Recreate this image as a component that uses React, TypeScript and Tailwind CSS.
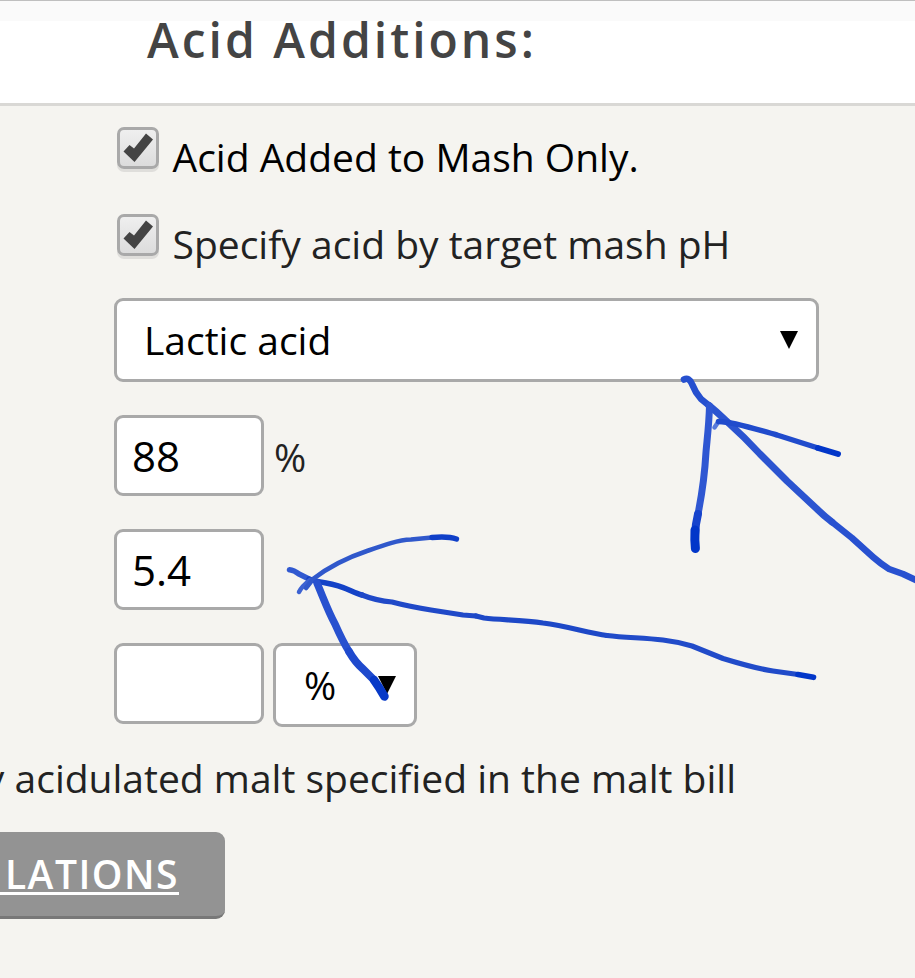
import type { ReactNode } from "react";
import clsx from "clsx";

interface InkSegment {
  d: string;
  width: number;
  color: string;
}

const inkSegments: InkSegment[] = [
  // arrow to the acid select
  { d: "M684 379.5 Q689 377 692 384 Q695 392 701 399 L709 405.5", width: 6.5, color: "#2650cf" },
  { d: "M709 405.5 C717 412 720 415 727 421.5 C741 434 748 441 760 454 L787 481 L817 509 Q824 516 832 522", width: 7, color: "#2b54d0" },
  { d: "M832 522 L852 538 L873 557 Q881 564 889 569 L903 574 L918 581", width: 6.5, color: "#2851d0" },
  { d: "M709.5 406 C709 425 707 440 706 452 C705 470 702 494 698 514", width: 7, color: "#2f57d2" },
  { d: "M698 514 Q695.5 524 695 535", width: 8, color: "#1744cc" },
  { d: "M695 530 Q694.5 540 695.4 548.5", width: 9, color: "#0236c9" },
  { d: "M714.5 427.5 L718.5 421.5", width: 4.5, color: "#587adb" },
  { d: "M718.5 421.5 C735 422 755 429 777 435 L818 448", width: 5.5, color: "#204bcc" },
  { d: "M818 448 L838 454", width: 6, color: "#0236c9" },
  // arrow to the pH field
  { d: "M289.5 569.7 Q294 570 299 574 L309 579", width: 5.5, color: "#3159d0" },
  { d: "M309 579 Q317 581.5 326 583 C345 586 351 592 362 595", width: 5.5, color: "#1442c7" },
  { d: "M362 595 C372 599 379 601 392 602 C407 606 419 608 431 610 L463 615 L476 616", width: 5.2, color: "#2049c8" },
  { d: "M476 616 L484 618 C501 620 523 620 543 623 C567 626 588 633 607 635.5", width: 5.2, color: "#1d48c7" },
  { d: "M607 635.5 C636 639 662 637 692 646 L723 658.5 C741 664 759 669 773 671 L798 674.5", width: 5.2, color: "#214bc9" },
  { d: "M798 674.5 L813.5 677.3", width: 5.6, color: "#0236c9" },
  { d: "M299 592 Q302 586 310 580", width: 4.5, color: "#3c62d2" },
  { d: "M306 588 L313 579 C330 566 349 557 367 551 C384 545 398 540 411 539.5 L432 537.5", width: 4.6, color: "#3058cb" },
  { d: "M432 537.5 Q448 536 456.5 539", width: 5.3, color: "#0f3fc8" },
  { d: "M317 583 C323 597 328 611 335 624 Q343 642 349 651.5", width: 7.5, color: "#2851cf" },
  { d: "M349 651.5 Q355 662 363 669 L374 680", width: 7.8, color: "#1f4acd" },
  { d: "M374 680 Q379 687 384.5 696.5", width: 8.5, color: "#0739c7" },
];

function InkLayer() {
  return (
    <svg className="pointer-events-none absolute inset-0" width="915" height="978" viewBox="0 0 915 978" fill="none">
      {inkSegments.map((segment) => (
        <path
          key={segment.d}
          d={segment.d}
          stroke={segment.color}
          strokeWidth={segment.width}
          strokeLinecap="round"
          strokeLinejoin="round"
        />
      ))}
    </svg>
  );
}

interface CheckRowProps {
  children: ReactNode;
  className?: string;
}

function CheckRow({ children, className }: CheckRowProps) {
  return (
    <label className={clsx("flex items-start pl-[3px]", className)}>
      <span className="flex h-[42px] w-[42px] shrink-0 items-center justify-center rounded-[7px] border-[3px] border-[#a9a9a9] bg-linear-to-b from-[#efefef] to-[#dcdcdc] shadow-[0_3px_0_#dfdedb]">
        <svg width="36" height="36" viewBox="0 0 36 36">
          <path d="M3.5 21.5 L9.5 15 L14 18.5 L26 3.5 L33 9.5 L14.5 32 Z" fill="#444" />
        </svg>
      </span>
      <span className="ml-[13.5px] text-[39px] leading-[59px] whitespace-nowrap">{children}</span>
    </label>
  );
}

function Caret() {
  return (
    <svg width="18" height="18" viewBox="0 0 18 18">
      <path d="M0 0 H18 L9 18 Z" fill="#000" />
    </svg>
  );
}

function Field({ value }: { value: string }) {
  return (
    <input
      defaultValue={value}
      className="h-[81px] w-[150px] rounded-[9px] border-[3px] border-[#a9a9a9] bg-white px-[15px] text-[42px] text-black outline-none"
    />
  );
}

export default function App() {
  return (
    <div className="relative h-[978px] w-[915px] overflow-hidden bg-[#f5f4f0] font-['Open_Sans',sans-serif] text-[#222]">
      <div className="h-[21px] border-t border-[#bfbfbf] bg-[#fafafa]" />
      <header className="h-[85px] border-b-[3px] border-[#d9d8d5] bg-white pl-[147px]">
        <h1 className="text-[48px] leading-[38px] font-semibold tracking-[3px] whitespace-nowrap text-[#444]">
          Acid Additions:
        </h1>
      </header>

      <main className="pt-[21px] pl-[114px]">
        <CheckRow className="h-[87px] text-black">Acid Added to Mash Only.</CheckRow>
        <CheckRow className="h-[84px]">Specify acid by target mash pH</CheckRow>

        <button className="flex h-[84px] w-[705px] items-center justify-between rounded-[9px] border-[3px] border-[#a9a9a9] bg-white pr-[18px] pl-[27px] text-[39px] text-black">
          Lactic acid
          <Caret />
        </button>

        <div className="mt-[33px] flex items-center">
          <Field value="88" />
          <span className="ml-[10px] pt-[2px] text-[39px] leading-[55px]">%</span>
        </div>
        <div className="mt-[33px] flex">
          <Field value="5.4" />
        </div>
        <div className="mt-[33px] flex items-start gap-[9px]">
          <Field value="" />
          <button className="flex h-[84px] w-36 items-center justify-between rounded-[9px] border-[3px] border-[#a9a9a9] bg-white pr-[18px] pl-7 text-[39px] text-black">
            %
            <Caret />
          </button>
        </div>
      </main>

      <p className="mt-[31px] flex w-[736px] justify-end text-[39px] leading-[39px] whitespace-nowrap">
        y acidulated malt specified in the malt bill
      </p>
      <button className="mt-[35px] flex h-[87px] w-[225px] items-center justify-end rounded-r-[9px] border-b-[3px] border-[#787878] bg-[#939393] pr-[46px] text-[39px] font-semibold tracking-[1.5px] whitespace-nowrap text-white underline decoration-[3px] underline-offset-[3px]">
        {"\u00a0LATIONS"}
      </button>

      <InkLayer />
    </div>
  );
}
